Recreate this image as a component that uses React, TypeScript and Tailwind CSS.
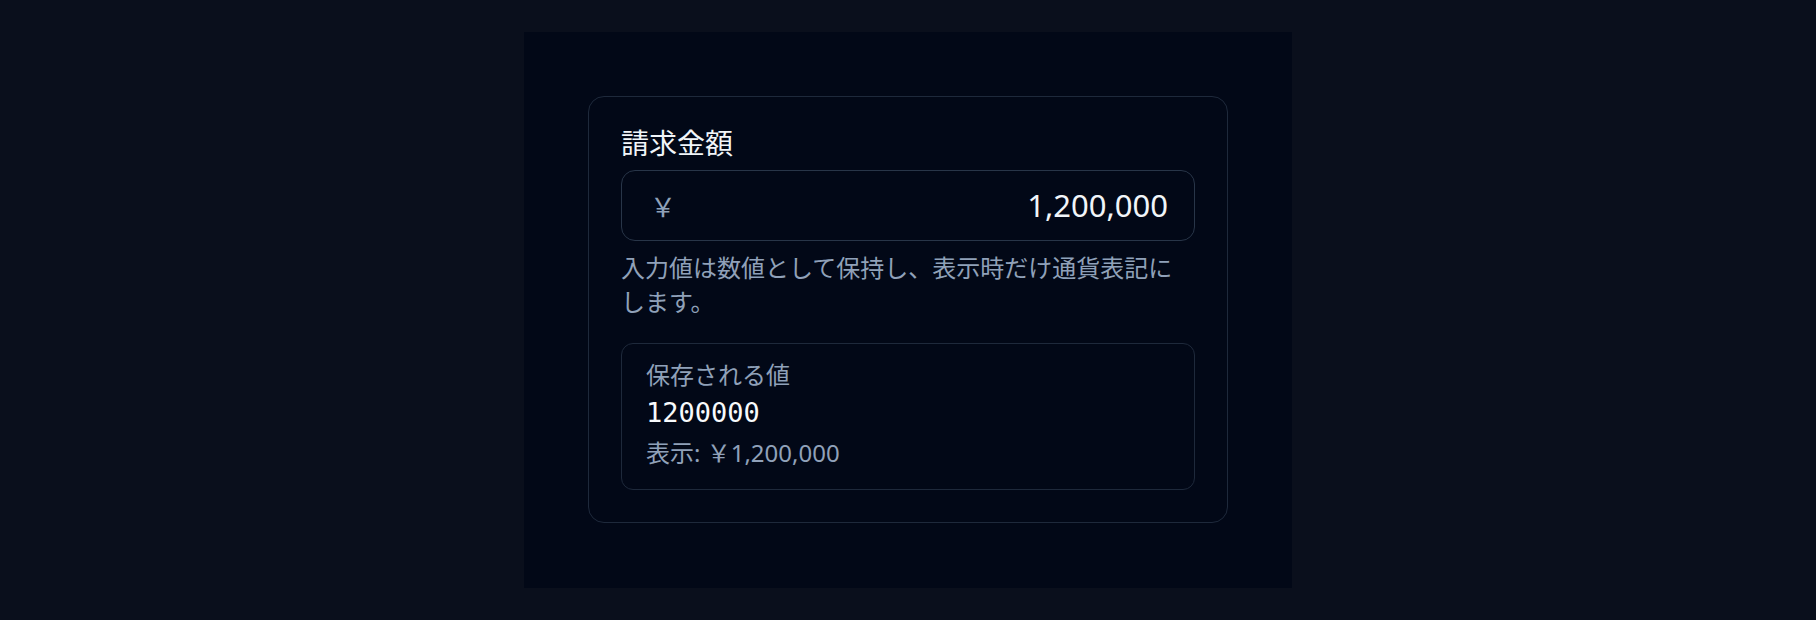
export default function App() {
  const value = 1200000;
  const display = "￥" + value.toLocaleString("en-US");

  return (
    <div
      className="w-full h-[620px] bg-[#0a0f1c] flex justify-center pt-8"
      style={{ fontFamily: '"Noto Sans", "Noto Sans CJK JP", sans-serif' }}
    >
      <div className="w-[768px] h-[556px] bg-[#020817] px-16 pt-16">
        <div className="w-[640px] rounded-2xl border border-[#1e293b] p-8">
          <label className="block text-[28px] leading-[28px] text-slate-100">請求金額</label>

          <div className="mt-[13px] h-[71px] rounded-[14px] border border-[#283548] flex items-center justify-between pl-7 pr-[26px]">
            <span className="text-[26px] text-slate-400" style={{ fontFamily: '"Noto Sans CJK JP", sans-serif' }}>
              ￥
            </span>
            <span className="text-[31px] text-slate-100">1,200,000</span>
          </div>

          <p className="mt-[10px] text-[24px] leading-[34px] text-slate-400">
            入力値は数値として保持し、表示時だけ通貨表記にします。
          </p>

          <div className="mt-6 rounded-xl border border-[#1e293b] px-6 pt-4 pb-[21px]">
            <div className="text-[24px] leading-[30px] text-slate-400">保存される値</div>
            <div
              className="mt-[6px] text-[27px] leading-[34px] text-slate-50"
              style={{ fontFamily: '"DejaVu Sans Mono", monospace' }}
            >
              {value}
            </div>
            <div className="mt-[8px] text-[24px] leading-[30px] text-slate-400">
              表示: {display}
            </div>
          </div>
        </div>
      </div>
    </div>
  );
}
